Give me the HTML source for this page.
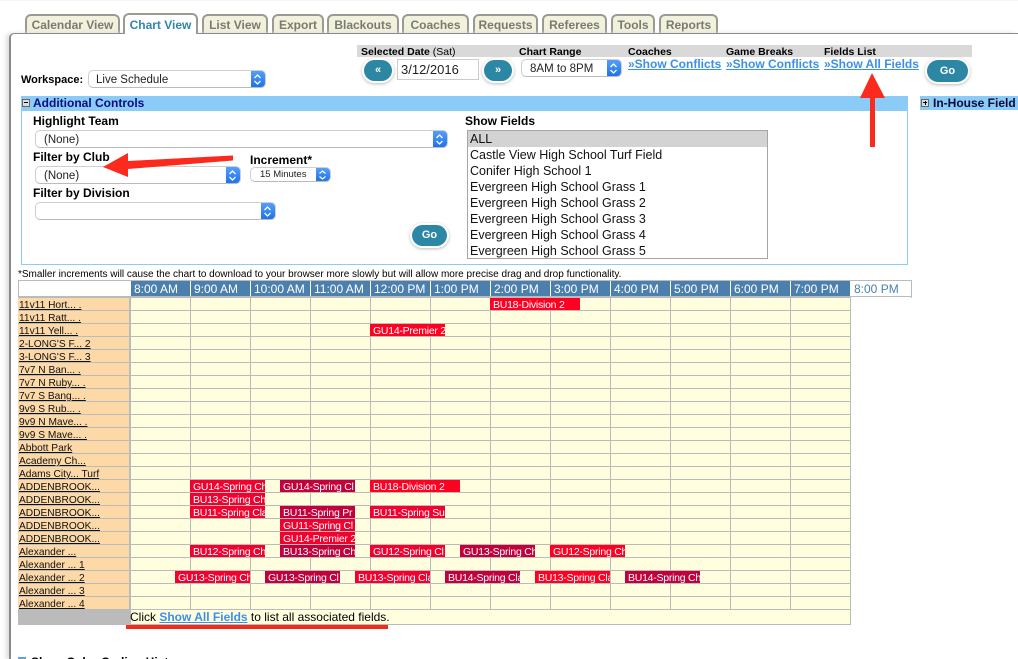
<!DOCTYPE html>
<html><head><meta charset="utf-8"><style>
html,body{margin:0;padding:0;background:#fff;height:659px;overflow:hidden}
body{width:1018px;position:relative;font-family:"Liberation Sans",Arial,sans-serif;color:#000}
.a,.tab,.sel,.btn,.t,.e,.lab,.h{position:absolute;white-space:nowrap;box-sizing:border-box}
.tab{top:14px;height:20px;background:#f1f1dc;border:2px solid #9a9a92;border-bottom:0;border-radius:6px 6px 0 0;color:#7a7a72;font-weight:bold;font-size:12px;line-height:18px;text-align:center}
.sel{background:#fff;border:1px solid #cfcfcf;border-bottom-color:#bbb;border-radius:5px;font-size:11.5px;color:#222;padding-left:8px;overflow:hidden;line-height:18px}
.sel:after{content:"";position:absolute;right:-1px;top:-1px;bottom:-1px;width:15px;background:linear-gradient(#58a2fb,#1b6fea);border-radius:0 5px 5px 0}
.btn{background:#2b87a3;border-radius:11px;box-shadow:0 0 0 2px #fff,0 1px 3px 2px #bbb;color:#fff;font-weight:bold;font-size:11px;text-align:center}
.t{font-size:12px}.b{font-weight:bold}
.l{color:#3b8fea;font-weight:bold;text-decoration:underline;font-size:12px}
.h{top:281px;height:15px;width:59px;background:#4b80ae;color:#fff;font-size:12px;line-height:16px;padding-left:3px}
.lab{left:19px;font-size:10.2px;height:13px;line-height:13px;text-decoration:underline;color:#111;margin-top:1px}
.e{height:12px;color:#fff;font-size:10.5px;letter-spacing:-.25px;line-height:14px;padding-left:3px;overflow:hidden;background:#f2002e}
.d{background:#c2003c}.r{background:#ff0022}
.o{left:470px;font-size:12.5px;color:#111;line-height:16px}
</style></head><body>
<div class="a" style="left:0;top:0;width:1018px;height:1px;background:#f5f5f5"></div>
<div class="tab" style="left:25px;width:95px">Calendar View</div>
<div class="tab" style="left:123px;top:13px;height:21px;width:75px;background:#fff;color:#2f86ad;z-index:3;line-height:20px">Chart View</div>
<div class="tab" style="left:202px;width:66px">List View</div>
<div class="tab" style="left:272px;width:52px">Export</div>
<div class="tab" style="left:327px;width:72px">Blackouts</div>
<div class="tab" style="left:402px;width:67px">Coaches</div>
<div class="tab" style="left:473px;width:65px">Requests</div>
<div class="tab" style="left:542px;width:65px">Referees</div>
<div class="tab" style="left:611px;width:44px">Tools</div>
<div class="tab" style="left:659px;width:59px">Reports</div>
<div class="a" style="left:9px;top:33px;width:1009px;height:626px;border:1px solid #8a8a8a;border-width:1px 0 0 2px;border-radius:5px 0 0 0;box-shadow:-3px 0 4px #ddd;z-index:2;pointer-events:none"></div>

<div class="t b" style="left:21px;top:73px;font-size:11px;line-height:14px">Workspace:</div>
<div class="sel" style="left:88px;top:70px;width:178px;height:18px;padding-left:7px">Live Schedule<svg style="position:absolute;right:3px;top:2px;z-index:1" width="9" height="13" viewBox="0 0 9 13"><path d="M1.5 5L4.5 2L7.500 5M1.5 8L4.5 11L7.5 8" fill="none" stroke="#fff" stroke-width="1.3"/></svg></div>

<div class="a" style="left:357px;top:45px;width:615px;height:12px;background:#d9d9d9"></div>
<div class="t b" style="left:361px;top:46px;font-size:10.5px;line-height:13px">Selected Date <span style="font-weight:normal">(Sat)</span></div>
<div class="t b" style="left:519px;top:46px;font-size:10.5px;line-height:13px">Chart Range</div>
<div class="t b" style="left:628px;top:46px;font-size:10.5px;line-height:13px">Coaches</div>
<div class="t b" style="left:726px;top:46px;font-size:10.5px;line-height:13px">Game Breaks</div>
<div class="t b" style="left:824px;top:46px;font-size:10.5px;line-height:13px">Fields List</div>
<div class="btn" style="left:364px;top:60px;width:28px;height:21px;line-height:20px">«</div>
<div class="a" style="left:397px;top:59px;width:82px;height:21px;border:1px solid #ccc;font-size:13px;line-height:19px;padding-left:3px;color:#222">3/12/2016</div>
<div class="btn" style="left:484px;top:60px;width:28px;height:21px;line-height:20px">»</div>
<div class="sel" style="left:521px;top:59px;width:101px;height:18px">8AM to 8PM<svg style="position:absolute;right:3px;top:2px;z-index:1" width="9" height="13" viewBox="0 0 9 13"><path d="M1.5 5L4.5 2L7.5 5M1.5 8L4.5 11L7.5 8" fill="none" stroke="#fff" stroke-width="1.3"/></svg></div>
<div class="a l" style="left:628px;top:57px;line-height:14px">»Show Conflicts</div>
<div class="a l" style="left:726px;top:57px;line-height:14px">»Show Conflicts</div>
<div class="a l" style="left:824px;top:57px;line-height:14px">»Show All Fields</div>
<div class="btn" style="left:927px;top:60px;width:41px;height:22px;line-height:22px">Go</div>

<div class="a" style="left:21px;top:96px;width:887px;height:15px;background:#8bcbf7"></div>
<div class="a" style="left:21px;top:111px;width:887px;height:154px;border:1px solid #8bcbf7;border-top:0"></div>
<div class="a" style="left:22px;top:99px;width:8px;height:8px;background:#ddd;border:1px solid #666;font-size:0"><div style="position:absolute;left:1px;top:2px;width:4px;height:1px;background:#000"></div></div>
<div class="t b" style="left:33px;top:96px;line-height:14px;color:#0b0b80">Additional Controls</div>
<div class="a" style="left:920px;top:96px;width:98px;height:14px;background:#8bcbf7"></div>
<div class="a" style="left:921px;top:99px;width:8px;height:8px;background:#ddd;border:1px solid #666"><div style="position:absolute;left:1px;top:2px;width:4px;height:1px;background:#000"></div><div style="position:absolute;left:2.5px;top:1px;width:1px;height:4px;background:#000"></div></div>
<div class="t b" style="left:933px;top:96px;line-height:14px;color:#0a0a3a">In-House Field</div>

<div class="t b" style="left:33px;top:114px;line-height:14px">Highlight Team</div>
<div class="sel" style="left:35px;top:130px;width:413px;height:18px">(None)<svg style="position:absolute;right:3px;top:2px;z-index:1" width="9" height="13" viewBox="0 0 9 13"><path d="M1.5 5L4.5 2L7.5 5M1.5 8L4.5 11L7.5 8" fill="none" stroke="#fff" stroke-width="1.3"/></svg></div>
<div class="t b" style="left:33px;top:150px;line-height:14px">Filter by Club</div>
<div class="sel" style="left:35px;top:166px;width:206px;height:18px">(None)<svg style="position:absolute;right:3px;top:2px;z-index:1" width="9" height="13" viewBox="0 0 9 13"><path d="M1.5 5L4.5 2L7.5 5M1.5 8L4.5 11L7.5 8" fill="none" stroke="#fff" stroke-width="1.3"/></svg></div>
<div class="t b" style="left:250px;top:153px;line-height:14px">Increment*</div>
<div class="sel" style="left:250px;top:167px;width:81px;height:15px;line-height:14px;font-size:9.5px;padding-left:9px">15 Minutes<svg style="position:absolute;right:3px;top:1px;z-index:1" width="9" height="12" viewBox="0 0 9 12"><path d="M1.5 4.5L4.5 2L7.5 4.5M1.5 7.5L4.5 10L7.5 7.5" fill="none" stroke="#fff" stroke-width="1.2"/></svg></div>
<div class="t b" style="left:33px;top:186px;line-height:14px">Filter by Division</div>
<div class="sel" style="left:35px;top:202px;width:241px;height:18px"><svg style="position:absolute;right:3px;top:2px;z-index:1" width="9" height="13" viewBox="0 0 9 13"><path d="M1.5 5L4.5 2L7.5 5M1.5 8L4.5 11L7.5 8" fill="none" stroke="#fff" stroke-width="1.3"/></svg></div>
<div class="btn" style="left:412px;top:225px;width:35px;height:21px;line-height:21px">Go</div>

<div class="t b" style="left:465px;top:114px;line-height:14px">Show Fields</div>
<div class="a" style="left:467px;top:130px;width:301px;height:129px;border:1px solid #a5a5a5"></div>
<div class="a" style="left:468px;top:131px;width:299px;height:16px;background:#d3d3d3"></div>
<div class="a o" style="top:131px">ALL</div>
<div class="a o" style="top:147px">Castle View High School Turf Field</div>
<div class="a o" style="top:163px">Conifer High School 1</div>
<div class="a o" style="top:179px">Evergreen High School Grass 1</div>
<div class="a o" style="top:195px">Evergreen High School Grass 2</div>
<div class="a o" style="top:211px">Evergreen High School Grass 3</div>
<div class="a o" style="top:227px">Evergreen High School Grass 4</div>
<div class="a o" style="top:243px">Evergreen High School Grass 5</div>

<div class="t" style="left:18px;top:268px;font-size:10px;line-height:13px">*Smaller increments will cause the chart to download to your browser more slowly but will allow more precise drag and drop functionality.</div>

<div class="a" style="left:18px;top:280px;width:894px;height:18px;border:1px solid #bbb;border-bottom:0"></div>
<div class="a" style="left:18px;top:296px;width:833px;height:2px;background:#bbb"></div>
<div class="h" style="left:131px">8:00 AM</div><div class="h" style="left:191px">9:00 AM</div><div class="h" style="left:251px">10:00 AM</div><div class="h" style="left:311px">11:00 AM</div><div class="h" style="left:371px">12:00 PM</div><div class="h" style="left:431px">1:00 PM</div><div class="h" style="left:491px">2:00 PM</div><div class="h" style="left:551px">3:00 PM</div><div class="h" style="left:611px">4:00 PM</div><div class="h" style="left:671px">5:00 PM</div><div class="h" style="left:731px">6:00 PM</div><div class="h" style="left:791px">7:00 PM</div>
<div class="h" style="left:851px;background:none;color:#4b80ae">8:00 PM</div>
<div class="a" style="left:850px;top:281px;width:62px;height:16px;border-bottom:1px solid #bbb"></div>

<div class="a" style="left:18px;top:298px;width:112px;height:312px;background-color:#fdd9a8;background-image:linear-gradient(to bottom,transparent 12px,#bbb 12px);background-size:100% 13px"></div>
<div class="a" style="left:18px;top:609px;width:112px;height:16px;background:#bbb"></div>
<div class="a" style="left:129px;top:297px;width:2px;height:328px;background:#bbb"></div>
<div class="a" style="left:131px;top:298px;width:720px;height:312px;background-color:#ffffe0;background-image:linear-gradient(to right,transparent 59px,#bbb 59px),linear-gradient(to bottom,transparent 12px,#bbb 12px);background-size:60px 100%,100% 13px"></div>
<div class="a" style="left:131px;top:609px;width:720px;height:16px;background:#ffffe0;border:1px solid #bbb;border-left:0"></div>

<div class="lab" style="top:298px">11v11 Hort... .</div>
<div class="lab" style="top:311px">11v11 Ratt... .</div>
<div class="lab" style="top:324px">11v11 Yell... .</div>
<div class="lab" style="top:337px">2-LONG'S F... 2</div>
<div class="lab" style="top:350px">3-LONG'S F... 3</div>
<div class="lab" style="top:363px">7v7 N Ban... .</div>
<div class="lab" style="top:376px">7v7 N Ruby... .</div>
<div class="lab" style="top:389px">7v7 S Bang... .</div>
<div class="lab" style="top:402px">9v9 S Rub... .</div>
<div class="lab" style="top:415px">9v9 N Mave... .</div>
<div class="lab" style="top:428px">9v9 S Mave... .</div>
<div class="lab" style="top:441px">Abbott Park </div>
<div class="lab" style="top:454px">Academy Ch... </div>
<div class="lab" style="top:467px">Adams City... Turf</div>
<div class="lab" style="top:480px">ADDENBROOK... </div>
<div class="lab" style="top:493px">ADDENBROOK... </div>
<div class="lab" style="top:506px">ADDENBROOK... </div>
<div class="lab" style="top:519px">ADDENBROOK... </div>
<div class="lab" style="top:532px">ADDENBROOK... </div>
<div class="lab" style="top:545px">Alexander ... </div>
<div class="lab" style="top:558px">Alexander ... 1</div>
<div class="lab" style="top:571px">Alexander ... 2</div>
<div class="lab" style="top:584px">Alexander ... 3</div>
<div class="lab" style="top:597px">Alexander ... 4</div>

<div class="e r" style="left:490px;top:298px;width:90px">BU18-Division 2</div>
<div class="e r" style="left:370px;top:324px;width:75px">GU14-Premier 2</div>
<div class="e" style="left:190px;top:480px;width:75px">GU14-Spring Ch</div>
<div class="e d" style="left:280px;top:480px;width:75px">GU14-Spring Cl</div>
<div class="e r" style="left:370px;top:480px;width:90px">BU18-Division 2</div>
<div class="e" style="left:190px;top:493px;width:75px">BU13-Spring Ch</div>
<div class="e" style="left:190px;top:506px;width:75px">BU11-Spring Cla</div>
<div class="e d" style="left:280px;top:506px;width:75px">BU11-Spring Pr</div>
<div class="e" style="left:370px;top:506px;width:75px">BU11-Spring Su</div>
<div class="e" style="left:280px;top:519px;width:75px">GU11-Spring Cl</div>
<div class="e" style="left:280px;top:532px;width:75px">GU14-Premier 2</div>
<div class="e" style="left:190px;top:545px;width:75px">BU12-Spring Ch</div>
<div class="e d" style="left:280px;top:545px;width:75px">BU13-Spring Ch</div>
<div class="e" style="left:370px;top:545px;width:75px">GU12-Spring Cl</div>
<div class="e d" style="left:460px;top:545px;width:75px">GU13-Spring Ch</div>
<div class="e r" style="left:550px;top:545px;width:75px">GU12-Spring Ch</div>
<div class="e" style="left:175px;top:571px;width:75px">GU13-Spring Ch</div>
<div class="e d" style="left:265px;top:571px;width:75px">GU13-Spring Cl</div>
<div class="e" style="left:355px;top:571px;width:75px">BU13-Spring Cla</div>
<div class="e d" style="left:445px;top:571px;width:75px">BU14-Spring Cla</div>
<div class="e r" style="left:535px;top:571px;width:75px">BU13-Spring Cla</div>
<div class="e d" style="left:625px;top:571px;width:75px">BU14-Spring Ch</div>

<div class="t" style="left:130px;top:610px;line-height:14px">Click <span class="l">Show All Fields</span> to list all associated fields.</div>

<div class="a" style="left:18px;top:657px;width:8px;height:2px;background:#6a9fc8"></div>
<div class="t b" style="left:31px;top:655px;line-height:14px">Show Color Coding History</div>

<svg class="a" style="left:0;top:0;z-index:5" width="1018" height="659" viewBox="0 0 1018 659">
<path d="M872 73L885 98H875V147H870V98H860Z" fill="#fb2a1c"/>
<path d="M103 167L128 153L128 161L233 155.500L233 160.500L128 169L128 177Z" fill="#fb2a1c"/>
<rect x="126" y="625" width="262" height="4" fill="#f02c1c"/>
</svg>
</body></html>
